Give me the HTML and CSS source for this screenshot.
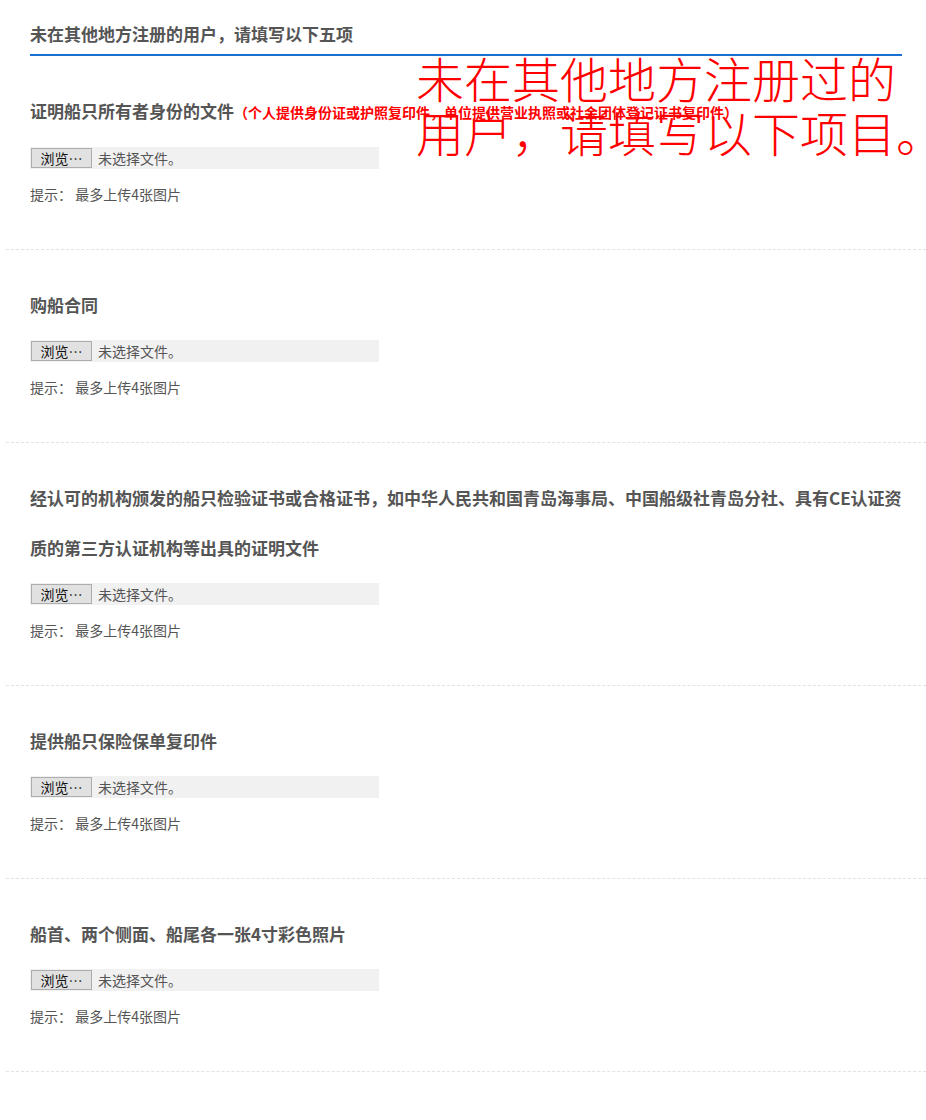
FILE: index.html
```html
<!DOCTYPE html>
<html lang="zh-CN">
<head>
<meta charset="utf-8">
<title>上传资料</title>
<link rel="stylesheet" href="styles.css">
</head>
<body>
<div class="page">
  <div class="wrap">
    <h2 class="head">未在其他地方注册的用户，请填写以下五项</h2>

    <div class="item">
      <div class="label">证明船只所有者身份的文件<span class="note">（个人提供身份证或护照复印件，单位提供营业执照或社会团体登记证书复印件）</span></div>
      <div class="file"><span class="btn">浏览…</span><span class="fname">未选择文件。</span></div>
      <div class="hint">提示： 最多上传4张图片</div>
    </div>

    <div class="item">
      <div class="label">购船合同</div>
      <div class="file"><span class="btn">浏览…</span><span class="fname">未选择文件。</span></div>
      <div class="hint">提示： 最多上传4张图片</div>
    </div>

    <div class="item">
      <div class="label">经认可的机构颁发的船只检验证书或合格证书，如中华人民共和国青岛海事局、中国船级社青岛分社、具有CE认证资质的第三方认证机构等出具的证明文件</div>
      <div class="file"><span class="btn">浏览…</span><span class="fname">未选择文件。</span></div>
      <div class="hint">提示： 最多上传4张图片</div>
    </div>

    <div class="item">
      <div class="label">提供船只保险保单复印件</div>
      <div class="file"><span class="btn">浏览…</span><span class="fname">未选择文件。</span></div>
      <div class="hint">提示： 最多上传4张图片</div>
    </div>

    <div class="item">
      <div class="label">船首、两个侧面、船尾各一张4寸彩色照片</div>
      <div class="file"><span class="btn">浏览…</span><span class="fname">未选择文件。</span></div>
      <div class="hint">提示： 最多上传4张图片</div>
    </div>
  </div>

  <div class="stamp">未在其他地方注册过的<br>用户，请填写以下项目。</div>
</div>
</body>
</html>
```

FILE: styles.css
```css
html, body {
  margin: 0;
  padding: 0;
  background: #ffffff;
  overflow-x: hidden;
}

.page {
  position: relative;
  width: 926px;
  height: 1120px;
  overflow: hidden;
  font-family: "Noto Sans CJK SC", "Microsoft YaHei", sans-serif;
  color: #555555;
}

.wrap {
  margin-left: 6px;
  width: 920px;
}

.head {
  margin: 14px 24px 0 24px;
  font-size: 17px;
  font-weight: 700;
  line-height: 40px;
  color: #555555;
  border-bottom: 2px solid #1a6fd3;
}

.item {
  padding: 30px 16px 45px 24px;
  border-bottom: 1px dashed #e2e2e2;
}

.label {
  font-size: 17px;
  font-weight: 700;
  line-height: 50px;
  color: #555555;
}

.note {
  font-size: 14px;
  color: #ff0000;
}

.file {
  display: flex;
  align-items: center;
  width: 349px;
  height: 22px;
  margin-top: 10px;
  background: #f1f1f1;
}

.btn {
  box-sizing: border-box;
  width: 61px;
  height: 20px;
  margin-left: 1px;
  border: 1px solid #adadad;
  background: #e1e1e1;
  color: #111111;
  font-size: 14px;
  line-height: 18px;
  text-align: center;
}

.fname {
  margin-left: 6px;
  font-size: 14px;
  color: #555555;
}

.hint {
  margin-top: 15px;
  font-size: 14px;
  line-height: 20px;
  color: #555555;
}

.stamp {
  position: absolute;
  left: 416px;
  top: 50px;
  font-size: 48px;
  font-weight: 300;
  line-height: 54px;
  color: #ff0000;
  white-space: nowrap;
}
```
